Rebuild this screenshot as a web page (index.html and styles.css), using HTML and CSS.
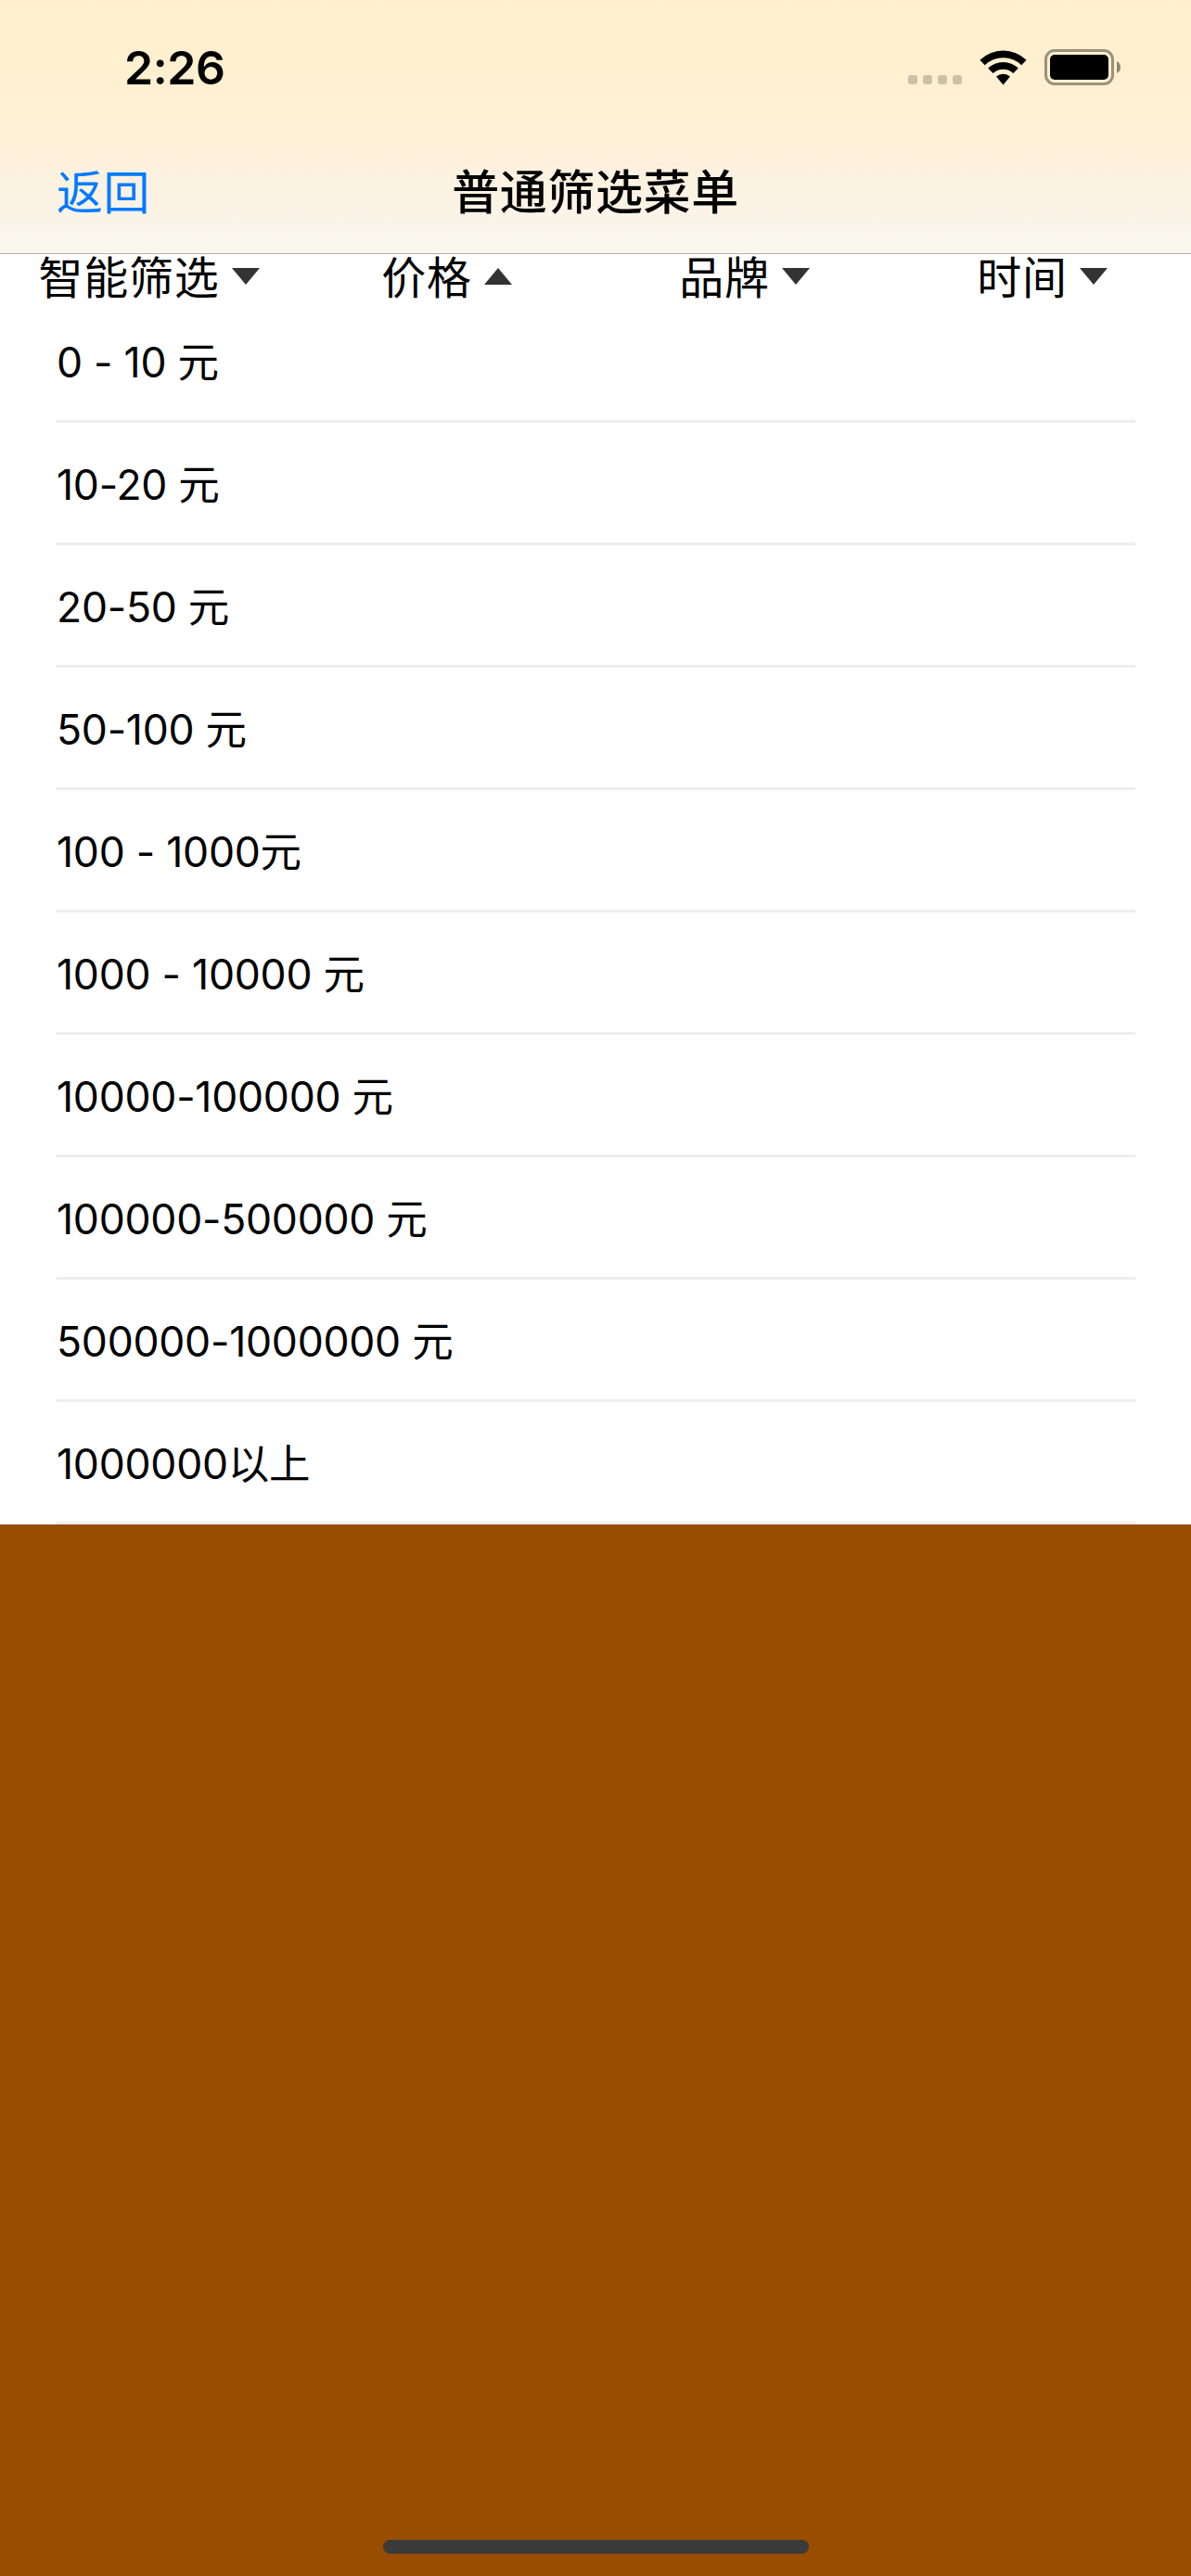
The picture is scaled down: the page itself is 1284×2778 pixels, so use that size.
FILE: index.html
```
<!DOCTYPE html>
<html lang="zh-CN">
<head>
<meta charset="utf-8">
<title>普通筛选菜单</title>
<link rel="stylesheet" href="styles.css">
</head>
<body>
<div class="screen">
  <header class="header">
    <div class="status">
      <span class="time">2:26</span>
      <svg class="dots" width="58" height="10" viewBox="0 0 58 10"><rect width="10" height="10" rx="3"/><rect x="16" width="10" height="10" rx="3"/><rect x="32" width="10" height="10" rx="3"/><rect x="48" width="10" height="10" rx="3"/></svg>
      <svg class="wifi" width="51" height="38" viewBox="0 0 51 38"><path d="M0.4 10.8 A36 36 0 0 1 50.6 10.8 L45.2 16.2 A28.5 28.5 0 0 0 5.8 16.2 Z"/><path d="M9.2 19.6 A23.4 23.4 0 0 1 41.8 19.6 L36.4 25 A16 16 0 0 0 14.6 25 Z"/><path d="M18 28.6 A11.5 11.5 0 0 1 33 28.6 L25.5 37.4 Z"/></svg>
      <svg class="battery" width="82" height="39" viewBox="0 0 82 39"><rect class="shell" x="1.5" y="1.5" width="72" height="36" rx="9.5"/><rect x="6" y="6" width="63" height="27" rx="5"/><path class="nub" d="M78 13 Q82 15 82 19.5 Q82 24 78 26 Z"/></svg>
    </div>
    <nav class="navbar">
      <a class="back">返回</a>
      <h1 class="title">普通筛选菜单</h1>
    </nav>
  </header>
  <div class="filters">
    <div class="filter"><span>智能筛选</span><svg class="arrow" width="30" height="18" viewBox="0 0 30 18"><path d="M0 0H30L15 18Z"/></svg></div>
    <div class="filter"><span>价格</span><svg class="arrow" width="30" height="18" viewBox="0 0 30 18"><path d="M0 18H30L15 0Z"/></svg></div>
    <div class="filter"><span>品牌</span><svg class="arrow" width="30" height="18" viewBox="0 0 30 18"><path d="M0 0H30L15 18Z"/></svg></div>
    <div class="filter"><span>时间</span><svg class="arrow" width="30" height="18" viewBox="0 0 30 18"><path d="M0 0H30L15 18Z"/></svg></div>
  </div>
  <ul class="options">
    <li>0 - 10 元</li>
    <li>10-20 元</li>
    <li>20-50 元</li>
    <li>50-100 元</li>
    <li>100 - 1000元</li>
    <li>1000 - 10000 元</li>
    <li>10000-100000 元</li>
    <li>100000-500000 元</li>
    <li>500000-1000000 元</li>
    <li>1000000以上</li>
  </ul>
  <footer class="backdrop"><div class="home"></div></footer>
</div>
</body>
</html>
```
FILE: styles.css
```
* { box-sizing: border-box; margin: 0; padding: 0; }

body {
  font-family: Inter, "Noto Sans CJK SC", sans-serif;
  color: #000;
  background: #fff;
}

.screen {
  display: flex;
  flex-direction: column;
  width: 1284px;
  height: 2778px;
  overflow: hidden;
}

.header {
  height: 274px;
  border-bottom: 1px solid #b2b0b0;
  background: linear-gradient(#ffefce 0, #fef0d0 90px, #fdf0d5 150px, #fcf1de 180px, #fbf3e5 220px, #f9f5ea 245px, #f9f6ee 273px);
}

.status {
  display: flex;
  height: 141px;
  padding-left: 134px;
}

.time {
  width: 845px;
  padding-top: 42px;
  font-size: 50px;
  font-weight: 600;
  line-height: 62px;
  letter-spacing: -0.4px;
}

.dots { margin-top: 81px; fill: #ccc1a6; }
.wifi { margin: 54px 0 0 19px; }
.battery { margin: 53px 0 0 19px; }
.shell { fill: none; stroke: #9a917d; stroke-width: 3; }
.nub { fill: #8e8674; }

.navbar {
  display: grid;
  grid-template-columns: 1fr auto 1fr;
  align-items: center;
  height: 132px;
  padding: 2px 60px 0;
}

.back {
  padding-left: 1px;
  color: #007aff;
  font-size: 50px;
  line-height: 60px;
  letter-spacing: 0.5px;
}

.title {
  font-size: 51px;
  font-weight: 500;
  line-height: 60px;
  letter-spacing: 0.6px;
}

.filters {
  display: grid;
  grid-template-columns: repeat(4, 1fr);
  height: 50px;
}

.filter {
  display: flex;
  align-items: center;
  justify-content: center;
  gap: 13px;
  font-size: 48px;
  line-height: 48px;
  letter-spacing: 0.8px;
}

.filter span { padding-top: 2px; }

.arrow { margin-bottom: 3px; fill: #333; }

.options {
  padding: 0 60px;
  list-style: none;
}

.options li {
  height: 132px;
  padding-left: 1px;
  border-bottom: 3px solid #eee;
  font-size: 44.5px;
  line-height: 134px;
  letter-spacing: -0.25px;
  white-space: nowrap;
}

.backdrop {
  display: flex;
  flex: 1;
  align-items: flex-end;
  justify-content: center;
  padding-bottom: 24px;
  background: #994d00;
}

.home {
  width: 459px;
  height: 15px;
  border-radius: 8px;
  background: #3a3a3a;
}
```
